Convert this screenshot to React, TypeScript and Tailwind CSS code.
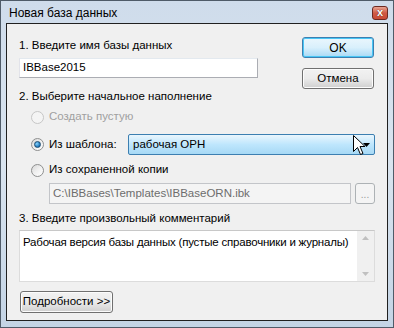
import React from 'react';

// Win7-style "new database" dialog

const Radio: React.FC<{ checked?: boolean; disabled?: boolean }> = ({ checked, disabled }) => (
  <span
    className={`flex h-[13px] w-[13px] shrink-0 items-center justify-center rounded-full border ${
      disabled
        ? 'border-[#c6c6c6] bg-[#f4f4f4]'
        : 'border-[#8e8f8f] bg-gradient-to-br from-[#d8d8d8] via-[#f0f0f0] to-[#ffffff]'
    }`}
  >
    {checked && (
      <span className="h-[7px] w-[7px] rounded-full border border-[#1c4c72] bg-[radial-gradient(circle_at_35%_35%,#8ad5ff,#1a74b8_70%)]" />
    )}
  </span>
);

const Cursor = () => (
  <svg width="13" height="21" viewBox="0 0 13 21" className="absolute left-[224px] top-[0px]">
    <path
      d="M0.5 0.5 L0.5 16.5 L4.5 12.5 L7.5 19.5 L10 18.5 L7 11.5 L12 11.5 Z"
      fill="#fff"
      stroke="#000"
      strokeWidth="1"
      strokeLinejoin="miter"
    />
  </svg>
);

export default function App() {
  return (
    <div className="flex h-[328px] w-[394px] flex-col whitespace-nowrap border border-[#4f5b68] bg-gradient-to-b from-[#cfdceb] via-[#d9e4ef] to-[#c4d4e5] font-['Liberation_Sans',sans-serif] text-[11.5px] text-black">
      {/* title bar */}
      <div className="flex h-[22px] shrink-0 items-center justify-between pl-[8px] pr-[5px]">
        <span className="pt-[1px] text-[12px]">Новая база данных</span>
        <button className="mt-[1px] flex h-[14px] w-[16px] items-center justify-center rounded-[3px] border border-[#6d2a22] bg-gradient-to-b from-[#e8a493] via-[#cf5a45] to-[#c94a35] text-[11px] font-bold leading-none text-white [text-shadow:0_0_1px_#3a0a05]">
          x
        </button>
      </div>

      {/* client area */}
      <div className="mx-[5px] mb-[6px] flex flex-1 flex-col border border-[#202020] bg-[#f0f0f0] pl-[12px] pr-[12px]">
        <div className="flex justify-between pt-[13px]">
          <div className="flex w-[239px] flex-col">
            <div className="h-[16px] leading-[16px]">1. Введите имя базы данных</div>
            <div className="mt-[5px] flex h-[20px] items-center border border-[#abadb3] border-t-[#e3e9ef] border-l-[#e2e3ea] bg-white pl-[3px]">
              IBBase2015
            </div>
          </div>
          <div className="flex flex-col gap-[10px] pr-[1px]">
            <button className="h-[21px] w-[72px] rounded-[3px] border border-[#3c7fb1] bg-gradient-to-b from-[#eaf6fd] via-[#d9f0fc] to-[#a7d9f5] text-[12px] shadow-[inset_0_0_0_1px_#48c6f5]">
              OK
            </button>
            <button className="h-[21px] w-[72px] rounded-[3px] border border-[#707070] bg-gradient-to-b from-[#f2f2f2] via-[#ebebeb] to-[#cfcfcf] shadow-[inset_0_0_0_1px_#fcfcfc]">
              Отмена
            </button>
          </div>
        </div>

        <div className="mt-[-1px] h-[16px] leading-[16px]">2. Выберите начальное наполнение</div>

        <div className="mt-[3px] flex h-[20px] items-center gap-[5px] pl-[12px] text-[#a0a0a0]">
          <Radio disabled />
          <span>Создать пустую</span>
        </div>

        <div className="mt-[7px] flex h-[21px] items-center pl-[12px]">
          <Radio checked />
          <span className="ml-[5px] w-[79px]">Из шаблона:</span>
          <div className="relative flex h-[21px] flex-1 items-center justify-between rounded-[2px] border border-[#3c7fb1] bg-gradient-to-b from-[#eaf6fd] via-[#bee6fd] to-[#a7d9f5] pl-[4px] pr-[4px]">
            <span>рабочая ОРН</span>
            <svg width="7" height="4" viewBox="0 0 7 4">
              <path d="M0 0 H7 L3.5 4 Z" fill="#000" />
            </svg>
            <Cursor />
          </div>
        </div>

        <div className="mt-[5px] flex h-[20px] items-center gap-[5px] pl-[12px]">
          <Radio />
          <span>Из сохраненной копии</span>
        </div>

        <div className="mt-[3px] flex h-[21px] gap-[4px] pl-[30px]">
          <div className="flex flex-1 items-center border border-[#c3c5c9] bg-[#f4f4f4] pl-[3px] text-[#6d6d6d]">
            C:\IBBases\Templates\IBBaseORN.ibk
          </div>
          <button className="flex w-[20px] items-end justify-center rounded-[3px] border border-[#adb2b5] bg-[#f4f4f4] pb-[3px] text-[10px] leading-none text-[#9a9a9a]">
            ...
          </button>
        </div>

        <div className="mt-[6px] h-[16px] leading-[16px]">3. Введите произвольный комментарий</div>

        <div className="mt-[4px] flex h-[52px] border border-[#dcdcdc] border-t-[#c8c8c8] bg-white">
          <div className="flex-1 overflow-hidden pl-[3px] pt-[3px] tracking-[-0.2px]">
            Рабочая версия базы данных (пустые справочники и журналы)
          </div>
          <div className="flex w-[17px] flex-col items-center justify-between bg-[#f0f0f0] py-[5px]">
            <svg width="7" height="4" viewBox="0 0 7 4">
              <path d="M0 4 H7 L3.5 0 Z" fill="#c0c0c0" />
            </svg>
            <svg width="7" height="4" viewBox="0 0 7 4">
              <path d="M0 0 H7 L3.5 4 Z" fill="#c0c0c0" />
            </svg>
          </div>
        </div>

        <div className="mt-[9px]">
          <button className="ml-[1px] h-[22px] w-[93px] rounded-[3px] border border-[#707070] bg-gradient-to-b from-[#f2f2f2] via-[#ebebeb] to-[#cfcfcf] shadow-[inset_0_0_0_1px_#fcfcfc]">
            Подробности &gt;&gt;
          </button>
        </div>
      </div>
    </div>
  );
}
